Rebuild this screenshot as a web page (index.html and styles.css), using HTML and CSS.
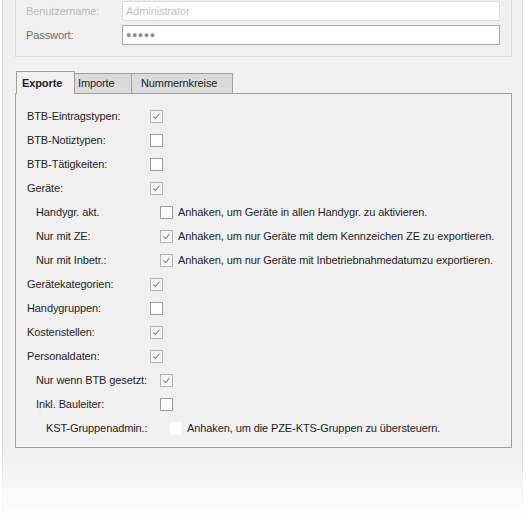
FILE: index.html
```html
<!DOCTYPE html>
<html lang="de">
<head>
    <meta charset="UTF-8">
    <meta name="viewport" content="width=device-width, initial-scale=1.0">
    <title>Export-Einstellungen</title>
    <link rel="stylesheet" href="styles.css">
</head>
<body>
    <div class="window">
        <div class="login">
            <span class="login-label disabled">Benutzername:</span>
            <div class="field field-disabled">Administrator</div>
            <span class="login-label">Passwort:</span>
            <div class="field field-password">&#9679;&#9679;&#9679;&#9679;&#9679;</div>
        </div>

        <div class="tabs">
            <div class="tab tab-active tab-export">Exporte</div>
            <div class="tab tab-import">Importe</div>
            <div class="tab tab-numbers">Nummernkreise</div>
        </div>

        <div class="panel">
            <div class="row"><span class="row-label">BTB-Eintragstypen:</span><span class="cb checked"></span></div>
            <div class="row"><span class="row-label">BTB-Notiztypen:</span><span class="cb"></span></div>
            <div class="row"><span class="row-label">BTB-Tätigkeiten:</span><span class="cb"></span></div>
            <div class="row"><span class="row-label">Geräte:</span><span class="cb checked"></span></div>
            <div class="row sub"><span class="row-label">Handygr. akt.</span><span class="cb"></span><span class="hint">Anhaken, um Geräte in allen Handygr. zu aktivieren.</span></div>
            <div class="row sub"><span class="row-label">Nur mit ZE:</span><span class="cb checked"></span><span class="hint">Anhaken, um nur Geräte mit dem Kennzeichen ZE zu exportieren.</span></div>
            <div class="row sub"><span class="row-label">Nur mit Inbetr.:</span><span class="cb checked"></span><span class="hint">Anhaken, um nur Geräte mit Inbetriebnahmedatumzu exportieren.</span></div>
            <div class="row"><span class="row-label">Gerätekategorien:</span><span class="cb checked"></span></div>
            <div class="row"><span class="row-label">Handygruppen:</span><span class="cb"></span></div>
            <div class="row"><span class="row-label">Kostenstellen:</span><span class="cb checked"></span></div>
            <div class="row"><span class="row-label">Personaldaten:</span><span class="cb checked"></span></div>
            <div class="row sub"><span class="row-label">Nur wenn BTB gesetzt:</span><span class="cb checked"></span></div>
            <div class="row sub"><span class="row-label">Inkl. Bauleiter:</span><span class="cb"></span></div>
            <div class="row subsub"><span class="row-label">KST-Gruppenadmin.:</span><span class="cb blank"></span><span class="hint">Anhaken, um die PZE-KTS-Gruppen zu übersteuern.</span></div>
        </div>
    </div>
</body>
</html>
```

FILE: styles.css
```css
body { margin: 0; background: #ffffff; font-family: "Liberation Sans", Arial, sans-serif; font-size: 11px; letter-spacing: -0.1px; color: #1e1e1e; }

.window { margin-left: 2px; width: 519px; height: 516px; overflow: hidden; border-style: solid; border-width: 0 1px; border-image: linear-gradient(to bottom, #d6d6d6 85%, #ffffff) 1; background: linear-gradient(to bottom, #f0f0f0 0, #f0f0f0 455px, #ffffff 516px); }

/* login box, top edge is scrolled away */
.login { display: grid; grid-template-columns: 96px 1fr; grid-auto-rows: 20px; row-gap: 4px; align-items: center; margin: -10px 10px 0 12px; padding: 10px 11px 11px 10px; border: 1px solid #d9d9d9; }
.login-label { color: #6d6d6d; }
.login-label.disabled { color: #b9b9b9; }
.field { height: 18px; line-height: 18px; padding-left: 3px; background: #ffffff; border: 1px solid #a9a9a9; }
.field-disabled { border-color: #dcdcdc; color: #c2c2c2; }
.field-password { color: #8c8c8c; font-size: 9px; letter-spacing: 0.5px; }

.tabs { display: flex; align-items: flex-start; margin: 14px 0 -1px 13px; height: 23px; }
.tab { position: relative; height: 19px; line-height: 19px; margin-top: 2px; margin-left: -1px; background: #dadada; border: 1px solid #a0a0a0; border-bottom: none; }
.tab-active { z-index: 1; height: 22px; line-height: 23px; margin-top: 0; margin-left: 0; background: #f0f0f0; font-weight: bold; }
.tab-export { width: 52px; padding-left: 5px; }
.tab-import { width: 53px; padding-left: 3px; }
.tab-numbers { width: 91px; padding-left: 9px; }

.panel { margin: 0 10px 0 12px; padding: 10px 0 7px 11px; border: 1px solid #a0a0a0; }
.row { display: flex; align-items: center; height: 24px; }
.row-label { width: 123px; flex-shrink: 0; }
.row.sub { padding-left: 9px; }
.row.sub .row-label { width: 124px; }
.row.subsub { padding-left: 19px; }

.cb { width: 11px; height: 11px; flex-shrink: 0; border: 1px solid #9c9c9c; background: #ffffff; }
.cb.checked { background: #f4f4f4 url("data:image/svg+xml;utf8,<svg xmlns='http://www.w3.org/2000/svg' width='11' height='11'><polyline points='2.5,5.5 4.5,7.5 8.5,3' fill='none' stroke='%23808080' stroke-width='1.1'/></svg>") no-repeat; border-color: #b4b4b4; }
.cb.blank { border-color: #f6f6f6; }
.hint { margin-left: 5px; white-space: nowrap; }
```
